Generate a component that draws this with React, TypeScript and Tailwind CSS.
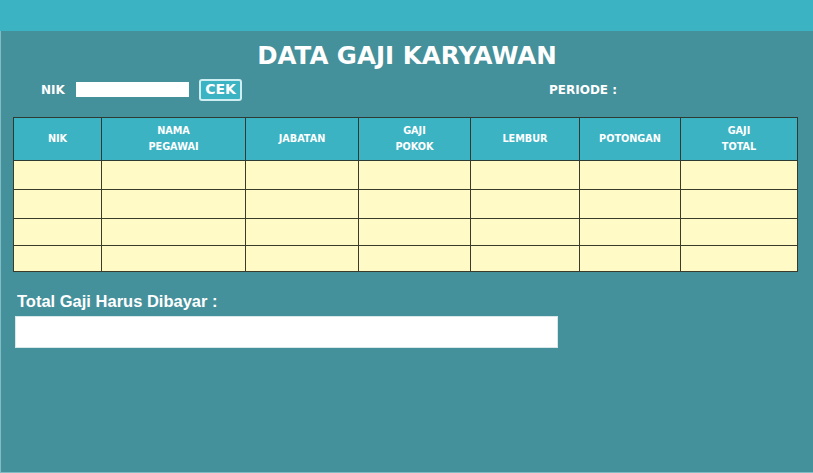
import React from "react";

const cols = [88, 144, 113, 112, 109, 101, 117];
const headers: string[][] = [
  ["NIK"],
  ["NAMA", "PEGAWAI"],
  ["JABATAN"],
  ["GAJI", "POKOK"],
  ["LEMBUR"],
  ["POTONGAN"],
  ["GAJI", "TOTAL"],
];
const rowHeights = [29, 29, 27, 26];
const dv = { fontFamily: '"DejaVu Sans", Verdana, sans-serif' };

export default function App() {
  return (
    <div className="w-[813px] h-[473px] flex flex-col overflow-hidden" style={{ fontFamily: '"Liberation Sans", Arial, sans-serif' }}>
      <div className="h-[31px] bg-[#3bb3c3] shrink-0" />
      <div className="flex-1 bg-[#44909b] border-l border-b border-[#7fbcc4] flex flex-col">
        <h1 className="text-center text-white font-bold text-[24.5px] leading-none mt-[13px]" style={dv}>
          DATA GAJI KARYAWAN
        </h1>
        <div className="flex items-center h-[22px] mt-[10px] text-white font-bold text-[12px]" style={dv}>
          <span className="ml-[40px] w-[35px]">NIK</span>
          <div className="w-[113px] h-[15px] bg-white" />
          <div className="ml-[10px] w-[43px] h-[22px] border-2 border-[#cfeef2] rounded-[3px] bg-[#3bb3c3] flex items-center justify-center text-[14px]">
            CEK
          </div>
          <span className="ml-[307px]">PERIODE :</span>
        </div>
        <table className="mt-[16px] ml-[12px] w-[785px] border-collapse table-fixed" style={dv}>
          <colgroup>
            {cols.map((w, i) => (
              <col key={i} style={{ width: w }} />
            ))}
          </colgroup>
          <thead>
            <tr className="h-[43px] bg-[#3bb3c3]">
              {headers.map((h, i) => (
                <th key={i} className="border border-[#2f3a33] p-0 text-white font-bold text-[9.7px] leading-[16px] text-center align-middle">
                  {h.map((l, j) => (
                    <div key={j}>{l}</div>
                  ))}
                </th>
              ))}
            </tr>
          </thead>
          <tbody>
            {rowHeights.map((rh, r) => (
              <tr key={r} className="bg-[#fffac6]" style={{ height: rh }}>
                {cols.map((_, c) => (
                  <td key={c} className="border border-[#3b3b2c] p-0" />
                ))}
              </tr>
            ))}
          </tbody>
        </table>
        <div className="mt-[21px] ml-[16px] text-white font-bold text-[16.5px] leading-none">Total Gaji Harus Dibayar :</div>
        <div className="mt-[7px] ml-[14px] w-[543px] h-[32px] bg-white border border-[#d8e8ea]" />
      </div>
    </div>
  );
}
